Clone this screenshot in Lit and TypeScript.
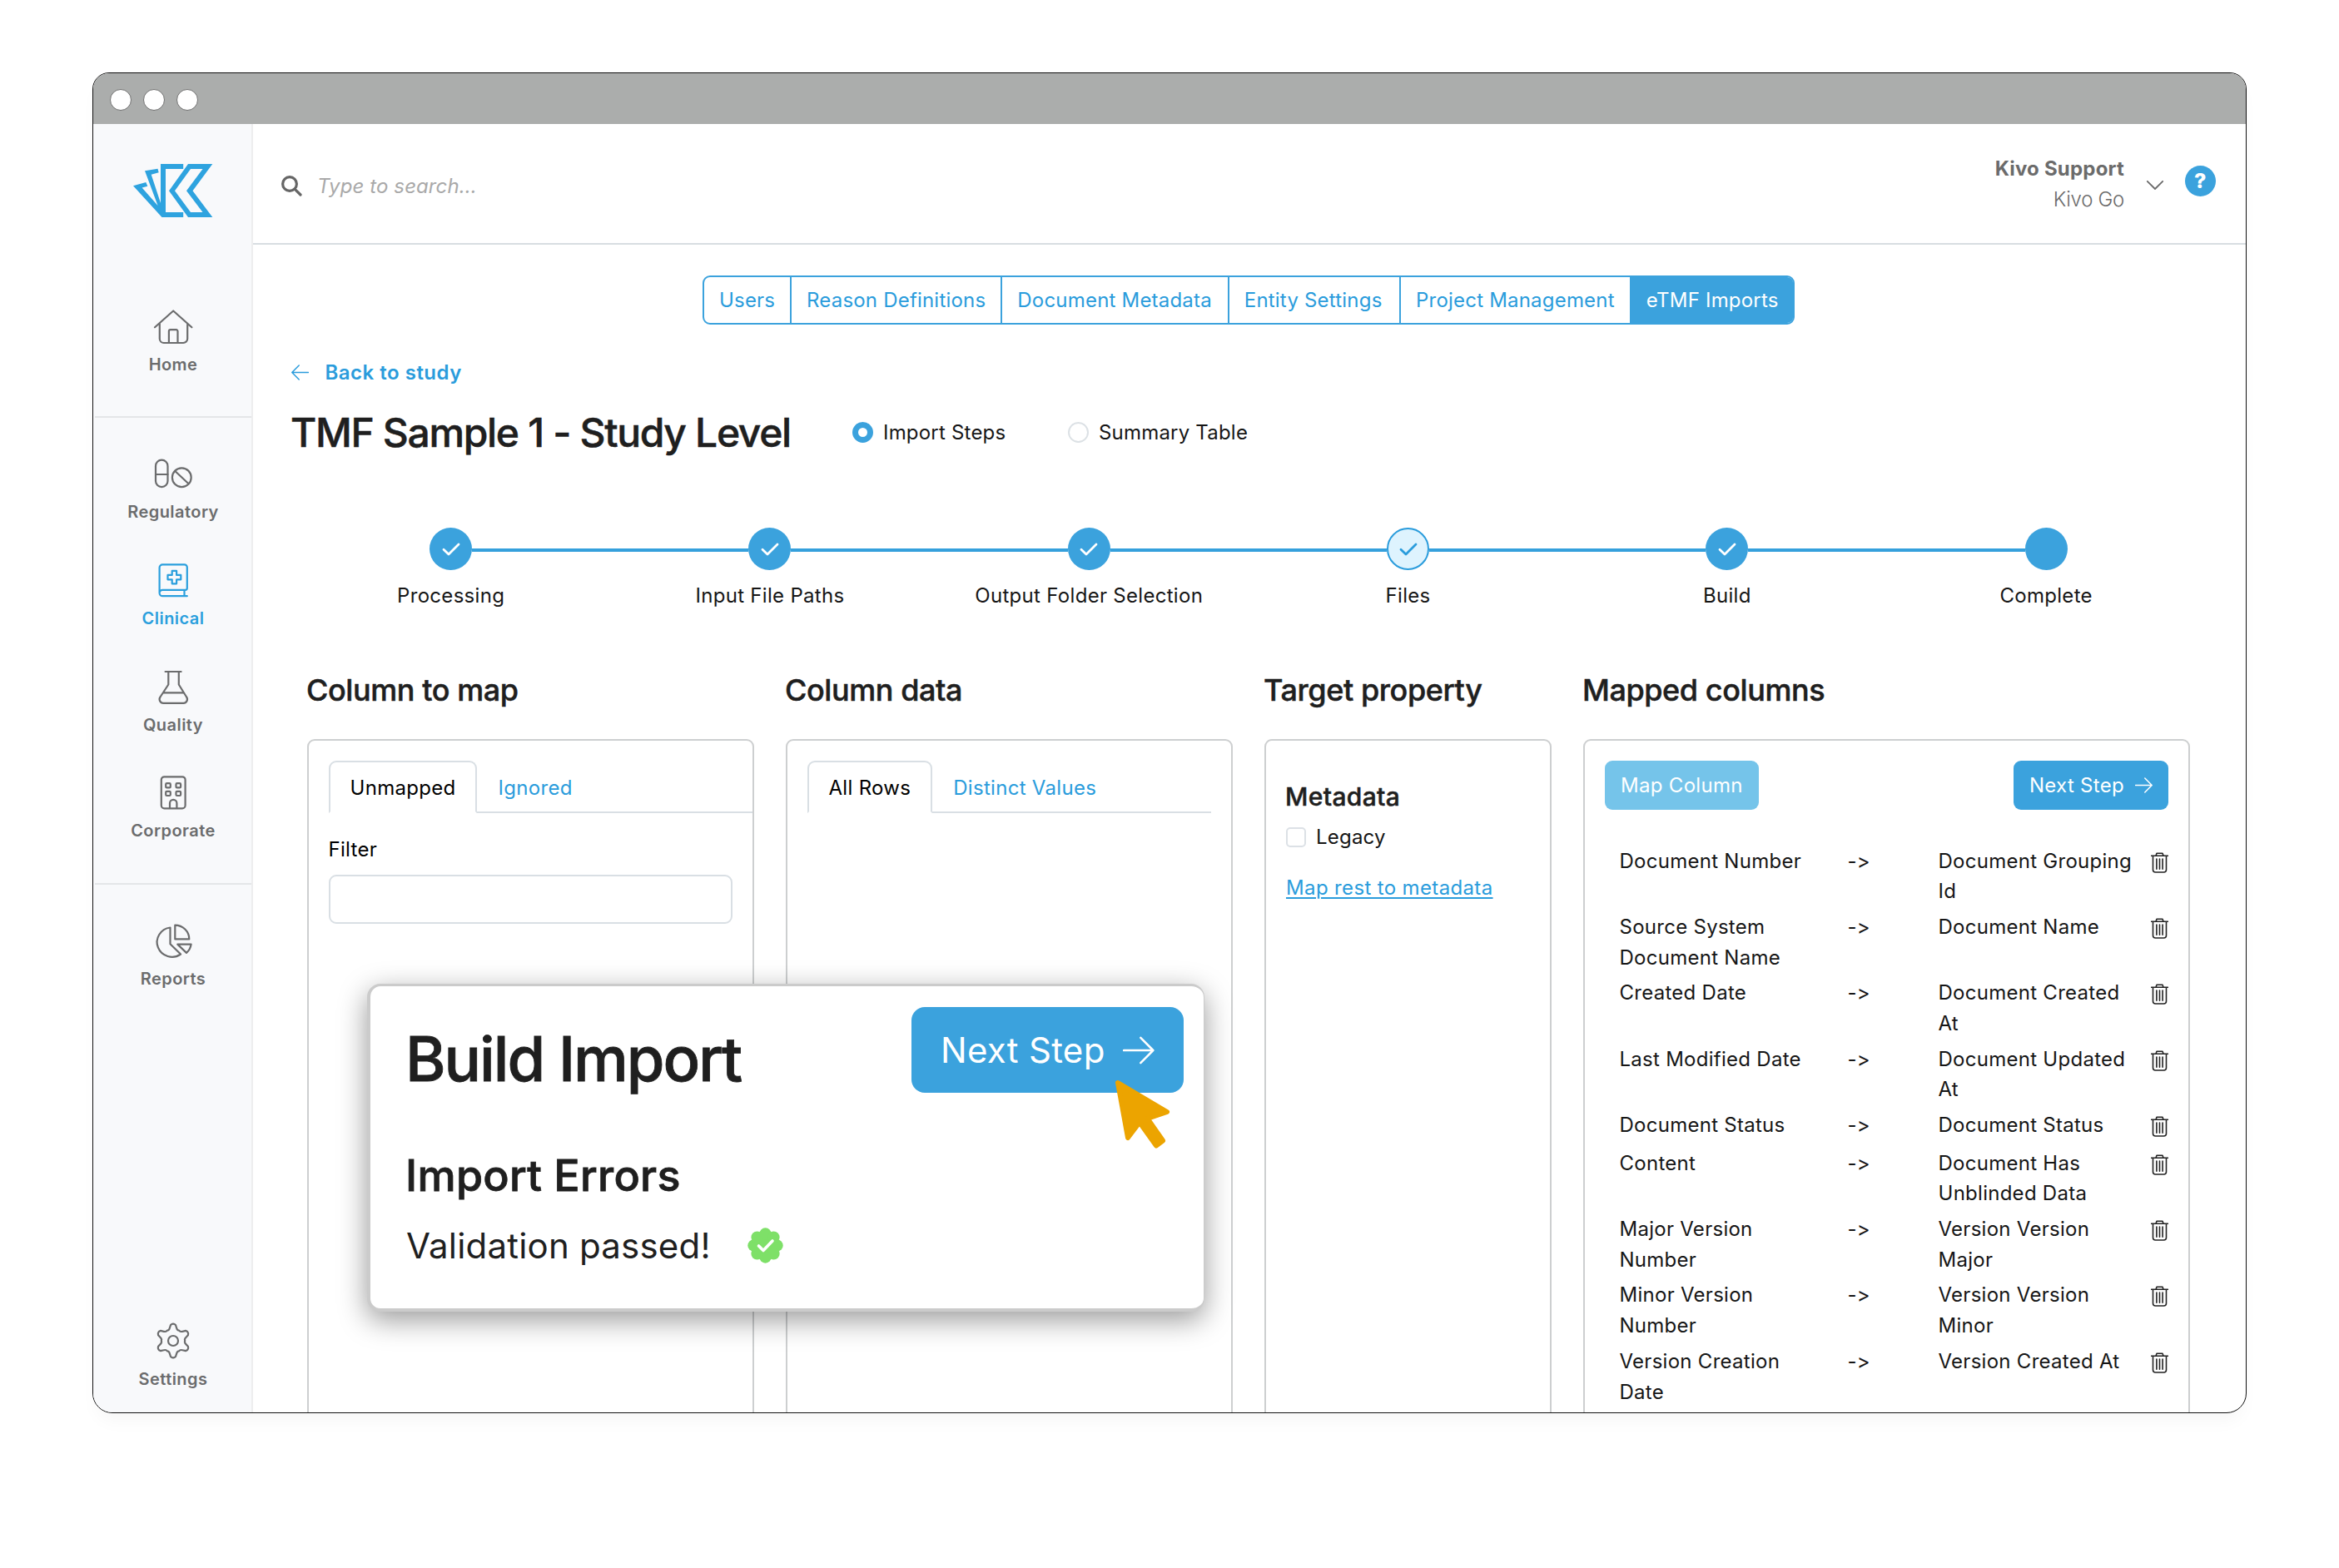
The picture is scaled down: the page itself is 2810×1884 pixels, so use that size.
import { LitElement, html, css, svg, nothing } from 'lit';
import { customElement, property } from 'lit/decorators.js';
import { classMap } from 'lit/directives/class-map.js';

// six-lobed gear outline, centred on 24,24
const gearPath = () => {
  const at = (deg: number, r: number) => {
    const a = (deg * Math.PI) / 180;
    return `${(24 + r * Math.sin(a)).toFixed(2)} ${(24 - r * Math.cos(a)).toFixed(2)}`;
  };
  let d = `M${at(-9, 19.2)}`;
  for (let k = 0; k < 360; k += 60) {
    d += `Q${at(k - 4, 20.6)} ${at(k, 20.4)}Q${at(k + 4, 20.6)} ${at(k + 9, 19.2)}`;
    d += `C${at(k + 18, 14.6)} ${at(k + 21, 13.4)} ${at(k + 30, 14.2)}`;
    d += `C${at(k + 39, 13.4)} ${at(k + 42, 14.6)} ${at(k + 51, 19.2)}`;
  }
  return d + 'Z';
};

const icons = {
  home: svg`<path d="M2 25.3 24.2 5.5 46.4 25.3M7.8 20.8V39a5 5 0 0 0 5 5h23.4a5 5 0 0 0 5-5V20.8M18.9 44V30a1.8 1.8 0 0 1 1.8-1.8h7a1.8 1.8 0 0 1 1.8 1.8v14"/>`,
  regulatory: svg`<rect x="3" y="7.7" width="14.5" height="32.5" rx="7.25"/><path d="M3 25h14.5M26.3 21l16 15"/><circle cx="34.3" cy="28.7" r="11.4"/>`,
  clinical: svg`<path d="M7.6 39.5V9a3.6 3.6 0 0 1 3.6-3.6h26.4A3.2 3.2 0 0 1 40.8 8.6v25.2a2 2 0 0 1-2 2H11.3a3.7 3.7 0 0 0 0 7.4h29.5M37.5 36v7"/><path d="M22.7 12.9h5.4v5h5.2v5.4h-5.2v5h-5.4v-5h-5.2v-5.4h5.2z"/>`,
  quality: svg`<path d="M14.6 6h19M18.3 6v15.5L8.5 36.5a4.6 4.6 0 0 0 3.9 7.3h23.8a4.6 4.6 0 0 0 3.9-7.3L30.8 21.5V6M12.3 31.3h24.2"/>`,
  corporate: svg`<rect x="9.8" y="5.3" width="28.8" height="38" rx="3.6"/><rect x="15.2" y="13.2" width="5.6" height="5.2" rx="1.2"/><rect x="27.5" y="13.2" width="5.6" height="5.2" rx="1.2"/><rect x="15.2" y="22.8" width="5.6" height="5.2" rx="1.2"/><rect x="27.5" y="22.8" width="5.6" height="5.2" rx="1.2"/><path d="M20 43v-6a4.2 4.2 0 0 1 8.4 0v6"/>`,
  reports: svg`<path d="M20.5 8.5v19.7l12.6 12.3A18 17.7 0 1 1 20.5 8.5zM26.3 5.6v16.8h17A17 16.8 0 0 0 26.3 5.6zM29.3 28.6h16.3a17 17 0 0 1-5.6 10.3z"/>`,
  settings: svg`<path d=${gearPath()}/><circle cx="24" cy="24" r="6"/>`,
};

const icon = (name: keyof typeof icons) => html`<svg class="nav-icon" viewBox="0 0 48 48">${icons[name]}</svg>`;

const arrowRight = html`<svg class="arrow" viewBox="0 0 21 19"><path d="M.5 9.5h19.5M11.8 1l8.4 8.5-8.4 8.5"/></svg>`;
const arrowLeft = html`<svg class="arrow" viewBox="0 0 21 19"><path d="M20.5 9.5H1M9.2 1 .8 9.5l8.4 8.5"/></svg>`;
const check = html`<svg class="check" viewBox="0 0 22 16"><path d="M2 8.2l6 5.8L20 2"/></svg>`;
const trash = html`
  <svg class="trash" viewBox="0 0 21 25">
    <path d="M.6 4.3h19.8M6 4.3l1-3h7l1 3M2.5 4.5V21a3 3 0 0 0 3 3h10a3 3 0 0 0 3-3V4.5M6.9 8v12.2M10.5 8v12.2M14.1 8v12.2"/>
  </svg>`;

@customElement('import-stepper')
class ImportStepper extends LitElement {
  @property({ attribute: false }) steps: { label: string; state: string }[] = [];

  static styles = css`
    .stepper {
      display: grid;
      grid-template-columns: repeat(6, 383.3px);
    }
    .step {
      display: flex;
      flex-direction: column;
      align-items: center;
      gap: 16px;
    }
    .track {
      display: flex;
      align-items: center;
      align-self: stretch;
    }
    .line {
      flex: 1;
      height: 4px;
      margin-top: 3px;
      background: #35a0dc;
    }
    .step:first-child .line:first-child,
    .step:last-child .line:last-child {
      background: none;
    }
    .dot {
      width: 51px;
      height: 51px;
      border-radius: 50%;
      box-sizing: border-box;
      background: #3ba2dd;
      display: flex;
      align-items: center;
      justify-content: center;
      color: #fff;
    }
    .dot.current {
      background: #def3fe;
      border: 2px solid #2a9cdc;
      color: #2a9cdc;
    }
    .check {
      width: 22px;
      height: 16px;
      fill: none;
      stroke: currentColor;
      stroke-width: 2.8;
      stroke-linecap: round;
      stroke-linejoin: round;
    }
    .label {
      line-height: 30px;
      white-space: nowrap;
    }
  `;

  render() {
    return html`
      <div class="stepper">
        ${this.steps.map((step) => html`
          <div class="step">
            <div class="track">
              <span class="line"></span>
              <span class=${classMap({ dot: true, current: step.state === 'current' })}>
                ${step.state === 'last' ? nothing : check}
              </span>
              <span class="line"></span>
            </div>
            <span class="label">${step.label}</span>
          </div>
        `)}
      </div>
    `;
  }
}

@customElement('app-root')
class AppRoot extends LitElement {
  tabs = ['Users', 'Reason Definitions', 'Document Metadata', 'Entity Settings', 'Project Management', 'eTMF Imports'];

  steps = [
    { label: 'Processing', state: 'done' },
    { label: 'Input File Paths', state: 'done' },
    { label: 'Output Folder Selection', state: 'done' },
    { label: 'Files', state: 'current' },
    { label: 'Build', state: 'done' },
    { label: 'Complete', state: 'last' },
  ];

  mappings = [
    ['Document Number', 'Document Grouping Id'],
    ['Source System Document Name', 'Document Name'],
    ['Created Date', 'Document Created At'],
    ['Last Modified Date', 'Document Updated At'],
    ['Document Status', 'Document Status'],
    ['Content', 'Document Has Unblinded Data'],
    ['Major Version Number', 'Version Version Major'],
    ['Minor Version Number', 'Version Version Minor'],
    ['Version Creation Date', 'Version Created At'],
  ];

  static styles = css`
    :host {
      display: block;
      box-sizing: border-box;
      width: 2810px;
      height: 1884px;
      padding: 87px 0 0 111px;
      overflow: hidden;
      background: #fff;
      color: #161616;
      font-family: Inter, 'Liberation Sans', sans-serif;
      font-size: 24px;
      letter-spacing: 0.3px;
    }
    * {
      box-sizing: border-box;
    }
    svg {
      display: block;
      flex: none;
      fill: none;
      stroke: currentColor;
      stroke-linecap: round;
      stroke-linejoin: round;
    }
    h1, h2, h3, p {
      margin: 0;
      font-weight: 500;
      color: #1f1f1f;
      white-space: nowrap;
    }
    h1, h2, h3 {
      -webkit-text-stroke: 0.5px currentColor;
    }

    .window {
      position: relative;
      display: flex;
      flex-direction: column;
      width: 2588px;
      height: 1611px;
      border: 1px solid #111;
      border-radius: 20px 20px 24px 24px;
      overflow: hidden;
      background: #fff;
      box-shadow: 0 14px 22px -6px rgba(0, 0, 0, 0.04);
    }
    .titlebar {
      flex: none;
      display: flex;
      gap: 14px;
      height: 61px;
      padding: 19px 20px 0;
      background: #abadac;
    }
    .light {
      width: 26px;
      height: 26px;
      border: 1px solid #707070;
      border-radius: 50%;
      background: #fff;
    }
    .body {
      flex: 1;
      min-height: 0;
      display: flex;
    }

    /* sidebar */
    .sidebar {
      flex: none;
      width: 192px;
      display: flex;
      flex-direction: column;
      padding: 48px 0 28px 2px;
      border-right: 2px solid #ededee;
      background: #f8f9fb;
      color: #6b6c6d;
    }
    .logo {
      align-self: center;
      width: 96px;
      height: 64px;
      margin-bottom: 63px;
      fill: #2ea3df;
      stroke: none;
    }
    .section {
      display: flex;
      flex-direction: column;
      gap: 45.8px;
      padding: 43.5px 0 50.5px;
      border-bottom: 2px solid #e4e6e8;
    }
    .section + .section {
      padding-top: 43px;
    }
    .section.last {
      border: 0;
    }
    .settings {
      margin-top: auto;
    }
    .item {
      display: flex;
      flex-direction: column;
      align-items: center;
      gap: 10px;
      font-size: 20px;
      font-weight: 600;
      letter-spacing: 0.45px;
      line-height: 24px;
    }
    .item.active {
      color: #2a9fdd;
    }
    .nav-icon {
      width: 48px;
      height: 48px;
      stroke-width: 2.2;
    }

    /* header */
    .content {
      flex: 1;
      min-width: 0;
      overflow: hidden;
    }
    .header {
      display: flex;
      align-items: center;
      height: 145px;
      padding: 2px 36px 0 34px;
      border-bottom: 2px solid #d8dde1;
      color: #6b6b6b;
    }
    .search-icon {
      width: 25px;
      height: 25px;
      margin: 4px 18px 0 0;
      stroke-width: 3.2;
      color: #666;
    }
    .search {
      flex: 1;
      padding-top: 4px;
      font-style: italic;
      letter-spacing: 0.1px;
      color: #a9a9a9;
    }
    .user {
      display: flex;
      flex-direction: column;
      align-items: flex-end;
      line-height: 36.7px;
    }
    .user-name {
      font-weight: 700;
      letter-spacing: 0.2px;
    }
    .user-org {
      font-weight: 300;
      letter-spacing: -0.3px;
    }
    .chevron {
      width: 20px;
      height: 11px;
      margin: 1px 26px 0 27px;
      stroke-width: 1.8;
    }
    .help {
      width: 37px;
      height: 37px;
      margin-top: -8px;
      border-radius: 50%;
      background: #3ba2dd;
      color: #fff;
      font-size: 25px;
      font-weight: 800;
      line-height: 37px;
      text-align: center;
    }

    /* page */
    .page {
      padding: 37px 0 0 46px;
    }
    .tabs {
      display: grid;
      grid-template-columns: 105px 253.3px 272.5px 206.3px 276.7px auto;
      width: 1312px;
      height: 58.5px;
      margin-left: 494px;
      border: 2px solid #3ba2dd;
      border-radius: 9px;
      overflow: hidden;
      color: #2a9cdc;
      letter-spacing: 0.2px;
    }
    .tab {
      display: flex;
      align-items: center;
      padding: 0 0 0 18px;
      border-right: 2px solid #3ba2dd;
      white-space: nowrap;
    }
    .tab.active {
      background: #3ba2dd;
      color: #fff;
    }
    .back {
      display: flex;
      align-items: center;
      gap: 19.5px;
      margin-top: 43px;
      line-height: 30px;
      font-weight: 600;
      letter-spacing: 0.5px;
      color: #2a9cdc;
    }
    .arrow {
      width: 21px;
      height: 19px;
      stroke-width: 1.5;
    }
    .title-row {
      display: flex;
      align-items: center;
      margin: 27px 0 84.5px;
      height: 60px;
    }
    .title-row h1 {
      width: 674.5px;
      margin-left: -1px;
      font-size: 48px;
      letter-spacing: -1.34px;
    }
    .radio {
      display: flex;
      align-items: center;
      gap: 12.5px;
      width: 259px;
      letter-spacing: 0.2px;
      white-space: nowrap;
    }
    .radio-dot {
      width: 25px;
      height: 25px;
      border: 2px solid #dce1e5;
      border-radius: 50%;
    }
    .radio-dot.on {
      border: 7.5px solid #3ba2dd;
    }

    .columns {
      display: grid;
      grid-template-columns: 537px 537px 345px 729px;
      gap: 38px;
      margin: 76px 0 0 19px;
    }
    .columns h2 {
      margin: 0 0 37px -1px;
      font-size: 36px;
      line-height: 44px;
      letter-spacing: -0.42px;
    }
    .card {
      height: 860px;
      padding: 24px;
      border: 2px solid #cdcfd0;
      border-radius: 9px;
    }
    .card-tabs {
      display: flex;
      height: 63px;
      line-height: 61px;
      border-bottom: 2px solid #d9dfe4;
      color: #2a9cdc;
      white-space: nowrap;
    }
    .card-tabs.bleed {
      margin-right: -24px;
    }
    .card-tab {
      padding: 2px 25.5px 0;
    }
    .card-tab.active {
      height: 63px;
      padding: 0 23.5px;
      border: 2px solid #d9dfe4;
      border-bottom-color: #fff;
      border-radius: 9px 9px 0 0;
      background: #fff;
      color: #000;
    }
    .filter {
      display: block;
      margin: 29px 0 15px -0.5px;
      line-height: 30px;
      color: #000;
    }
    .input {
      height: 59px;
      border: 2px solid #d9dfe4;
      border-radius: 9px;
    }
    h3 {
      margin: 24px 0 14.5px -1px;
      font-size: 30px;
      line-height: 38px;
      letter-spacing: 0.35px;
    }
    .checkbox {
      display: flex;
      align-items: center;
      gap: 12px;
      line-height: 30px;
      letter-spacing: 0.2px;
    }
    .box {
      width: 24px;
      height: 24px;
      border: 2px solid #dce1e6;
      border-radius: 5px;
    }
    .link {
      display: inline-block;
      margin-top: 31px;
      line-height: 30px;
      color: #2a9cdc;
      letter-spacing: 0.36px;
      text-decoration: underline;
      text-decoration-thickness: 2px;
      text-underline-offset: 3px;
      white-space: nowrap;
    }
    .actions {
      display: flex;
      justify-content: space-between;
      margin-bottom: 41px;
    }
    .button {
      display: flex;
      align-items: center;
      gap: 13px;
      height: 58.5px;
      padding: 0 19px;
      border-radius: 9px;
      background: #3ba2dd;
      color: #fff;
      white-space: nowrap;
    }
    .button.disabled {
      background: #75c4ea;
    }
    .mapping {
      display: grid;
      grid-template-columns: 274px 109px 255px 21px;
      min-height: 45.5px;
      margin-left: 17.5px;
      padding: 3px 0;
      line-height: 36.7px;
      letter-spacing: 0.27px;
    }
    .field {
      max-width: 240px;
    }
    .trash {
      width: 21px;
      height: 25px;
      margin-top: 7px;
      stroke-width: 1.6;
      color: #222;
    }

    /* floating result card */
    .modal {
      position: absolute;
      left: 329px;
      top: 1094px;
      width: 1006px;
      height: 394px;
      padding: 25px 24.5px 0 42px;
      border: solid #cbcbcb;
      border-width: 3px 1px 4px 4px;
      border-radius: 16px;
      background: #fff;
      box-shadow: 0 10px 34px rgba(0, 0, 0, 0.4);
    }
    .modal-top {
      display: flex;
      justify-content: space-between;
      align-items: flex-start;
      height: 107px;
      margin-bottom: 63.5px;
    }
    .modal h1 {
      margin-top: 17px;
      font-size: 74px;
      line-height: 90px;
      letter-spacing: -2px;
    }
    .modal h2 {
      font-size: 52px;
      line-height: 64px;
      letter-spacing: 0.27px;
    }
    .modal .button {
      width: 326.5px;
      height: 103px;
      padding: 0 35px;
      gap: 21px;
      border-radius: 16px;
      font-size: 42px;
    }
    .modal h1,
    .modal h2 {
      -webkit-text-stroke-width: 0.8px;
    }
    .modal .arrow {
      width: 38px;
      height: 34px;
      stroke-width: 1.4;
    }
    .passed {
      display: flex;
      align-items: center;
      gap: 44px;
      margin: 26px 0 0 1px;
      font-size: 42px;
      font-weight: 400;
      line-height: 52px;
      letter-spacing: 0.2px;
    }
    .badge {
      width: 43px;
      height: 43px;
      fill: #7ee068;
      stroke: none;
    }
    .cursor {
      position: absolute;
      left: 1224.5px;
      top: 1207px;
      width: 70px;
      height: 88px;
      fill: #eca400;
      stroke: #eca400;
      stroke-width: 6;
    }
  `;

  renderItem(name: keyof typeof icons, label: string, active = false) {
    return html`<div class=${classMap({ item: true, active })}>${icon(name)}<span>${label}</span></div>`;
  }

  renderSidebar() {
    return html`
      <div class="sidebar">
        <svg class="logo" viewBox="0 0 96 64">
          <path d="M33 0h27.2v6H39v52h21.2v6H34.5L0 26.3l15.3-4.3 2 4.7-6.7 1.8 19 21.5L14 8.3l15.5-2.6 1.2 4.6-9 2.4L33 47z"/>
          <path fill-rule="evenodd" d="M66 0h29.3L71.5 32.3 95.3 64H66L43 32.3zM69 6 50 32.3 69 58h14.5L64 32.3 83.5 6z"/>
        </svg>
        <div class="section">${this.renderItem('home', 'Home')}</div>
        <div class="section">
          ${this.renderItem('regulatory', 'Regulatory')}
          ${this.renderItem('clinical', 'Clinical', true)}
          ${this.renderItem('quality', 'Quality')}
          ${this.renderItem('corporate', 'Corporate')}
        </div>
        <div class="section last">${this.renderItem('reports', 'Reports')}</div>
        <div class="settings">${this.renderItem('settings', 'Settings')}</div>
      </div>
    `;
  }

  renderHeader() {
    return html`
      <div class="header">
        <svg class="search-icon" viewBox="0 0 25 25"><circle cx="10" cy="10" r="8.4"/><path d="M16.3 16.3 23 23"/></svg>
        <span class="search">Type to search...</span>
        <div class="user">
          <span class="user-name">Kivo Support</span>
          <span class="user-org">Kivo Go</span>
        </div>
        <svg class="chevron" viewBox="0 0 20 11"><path d="M.8.8 10 10 19.2.8"/></svg>
        <span class="help">?</span>
      </div>
    `;
  }

  renderColumns() {
    return html`
      <div class="columns">
        <div>
          <h2>Column to map</h2>
          <div class="card">
            <div class="card-tabs bleed">
              <span class="card-tab active">Unmapped</span>
              <span class="card-tab">Ignored</span>
            </div>
            <label class="filter">Filter</label>
            <div class="input"></div>
          </div>
        </div>
        <div>
          <h2>Column data</h2>
          <div class="card">
            <div class="card-tabs">
              <span class="card-tab active">All Rows</span>
              <span class="card-tab">Distinct Values</span>
            </div>
          </div>
        </div>
        <div>
          <h2>Target property</h2>
          <div class="card">
            <h3>Metadata</h3>
            <div class="checkbox"><span class="box"></span>Legacy</div>
            <a class="link">Map rest to metadata</a>
          </div>
        </div>
        <div>
          <h2>Mapped columns</h2>
          <div class="card">
            <div class="actions">
              <span class="button disabled">Map Column</span>
              <span class="button">Next Step ${arrowRight}</span>
            </div>
            ${this.mappings.map(([source, target]) => html`
              <div class="mapping">
                <span class="field">${source}</span>
                <span>-&gt;</span>
                <span class="field">${target}</span>
                ${trash}
              </div>
            `)}
          </div>
        </div>
      </div>
    `;
  }

  renderModal() {
    const lobes = [0, 45, 90, 135, 180, 225, 270, 315].map((deg) => (deg * Math.PI) / 180);
    return html`
      <div class="modal">
        <div class="modal-top">
          <h1>Build Import</h1>
          <span class="button">Next Step ${arrowRight}</span>
        </div>
        <h2>Import Errors</h2>
        <p class="passed">
          Validation passed!
          <svg class="badge" viewBox="-21.5 -21.5 43 43">
            <circle r="17"/>
            ${lobes.map((a) => svg`<circle cx=${14 * Math.cos(a)} cy=${14 * Math.sin(a)} r="7.2"/>`)}
            <path d="M-8 .5-2.5 6 8.5-5.5" fill="none" stroke="#fff" stroke-width="3.6"/>
          </svg>
        </p>
      </div>
      <svg class="cursor" viewBox="0 0 70 88">
        <path d="M6 6 65 41 41.5 49 60 75.5 52 81.5 32 53.5 18 72z"/>
      </svg>
    `;
  }

  render() {
    return html`
      <div class="window">
        <div class="titlebar">
          <span class="light"></span><span class="light"></span><span class="light"></span>
        </div>
        <div class="body">
          ${this.renderSidebar()}
          <div class="content">
            ${this.renderHeader()}
            <div class="page">
              <div class="tabs">
                ${this.tabs.map((tab) => html`
                  <span class=${classMap({ tab: true, active: tab === 'eTMF Imports' })}>${tab}</span>
                `)}
              </div>
              <div class="back">${arrowLeft}<span>Back to study</span></div>
              <div class="title-row">
                <h1>TMF Sample 1 - Study Level</h1>
                <span class="radio"><span class="radio-dot on"></span>Import Steps</span>
                <span class="radio"><span class="radio-dot"></span>Summary Table</span>
              </div>
              <import-stepper .steps=${this.steps}></import-stepper>
              ${this.renderColumns()}
            </div>
          </div>
        </div>
        ${this.renderModal()}
      </div>
    `;
  }
}
